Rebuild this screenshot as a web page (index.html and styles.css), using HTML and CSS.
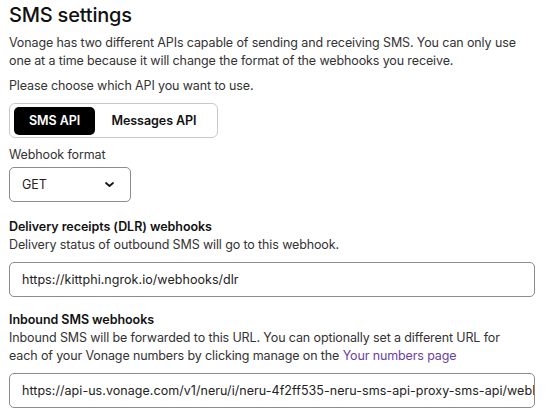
FILE: index.html
```html
<!DOCTYPE html>
<html>
<head>
<meta charset="utf-8">
<link rel="stylesheet" href="styles.css">
</head>
<body>
<div class="page">
  <h1 class="title">SMS settings</h1>
  <p class="text intro">Vonage has two different APIs capable of sending and receiving SMS. You can only use one at a time because it will change the format of the webhooks you receive.</p>
  <p class="text choose">Please choose which API you want to use.</p>
  <div class="tabs">
    <button class="tab active">SMS API</button>
    <button class="tab">Messages API</button>
  </div>
  <div class="label">Webhook format</div>
  <div class="select">
    <span>GET</span>
    <svg class="chev" width="9" height="5" viewBox="0 0 9 5"><path d="M1 1 L4.5 4 L8 1" fill="none" stroke="#111" stroke-width="1.7" stroke-linecap="round" stroke-linejoin="round"/></svg>
  </div>
  <div class="section">
    <div class="heading">Delivery receipts (DLR) webhooks</div>
    <p class="text">Delivery status of outbound SMS will go to this webhook.</p>
    <div class="input"><span>https://kittphi.ngrok.io/webhooks/dlr</span></div>
  </div>
  <div class="section section-tight">
    <div class="heading">Inbound SMS webhooks</div>
    <p class="text">Inbound SMS will be forwarded to this URL. You can optionally set a different URL for each of your Vonage numbers by clicking manage on the <a class="link" href="#">Your numbers page</a></p>
    <div class="input"><span>https://api-us.vonage.com/v1/neru/i/neru-4f2ff535-neru-sms-api-proxy-sms-api/webhooks/inbound</span></div>
  </div>
</div>
</body>
</html>
```
FILE: styles.css
```css
* { box-sizing: border-box; }
html, body { margin: 0; padding: 0; background: #fff; }
body {
  font-family: Inter, "Noto Sans", sans-serif;
  color: #2b2b2b;
  overflow: hidden;
}
.page {
  padding: 3px 14px 0 9px;
  display: flex;
  flex-direction: column;
  align-items: flex-start;
}
.title {
  margin: 0;
  font-size: 20px;
  font-weight: 500;
  line-height: 24px;
  color: #111;
  letter-spacing: -0.2px;
}
.text {
  margin: 0;
  max-width: 511px;
  font-size: 12.5px;
  letter-spacing: -0.12px;
  line-height: 18px;
  color: #333;
}
.intro { margin-top: 7px; }
.choose { margin-top: 7px; }
.tabs {
  margin-top: 8px;
  display: flex;
  align-items: center;
  padding: 0 4px;
  border: 1px solid #c8c8c8;
  border-radius: 6px;
  width: 209px;
  height: 35px;
}
.tab {
  font-family: inherit;
  font-size: 12.5px;
  letter-spacing: -0.05px;
  font-weight: 600;
  border: none;
  background: transparent;
  color: #111;
  padding: 0;
  border-radius: 5px;
  height: 28px;
  white-space: nowrap;
  cursor: pointer;
}
.tab.active {
  background: #000;
  color: #fff;
  width: 81px;
}
.tab:not(.active) {
  flex: 1;
}
.label {
  margin-top: 8px;
  font-size: 12.5px;
  letter-spacing: -0.12px;
  line-height: 18px;
  color: #333;
}
.select {
  margin-top: 3px;
  width: 122px;
  height: 35px;
  border: 1px solid #8c8c8c;
  border-radius: 5px;
  display: flex;
  align-items: center;
  justify-content: space-between;
  padding: 0 16px 0 12px;
  font-size: 12.5px;
  color: #222;
}
.section {
  align-self: stretch;
  margin-top: 16px;
  display: flex;
  flex-direction: column;
}
.section-tight { margin-top: 14px; }
.heading {
  font-size: 12.5px;
  letter-spacing: -0.05px;
  font-weight: 600;
  line-height: 18px;
  color: #111;
}
.input {
  margin-top: 8px;
  height: 35px;
  border: 1px solid #8c8c8c;
  border-radius: 5px;
  display: flex;
  align-items: center;
  padding: 0 12px;
  font-size: 12.5px;
  letter-spacing: 0.05px;
  color: #222;
  overflow: hidden;
  white-space: nowrap;
}
.link {
  color: #6b3fa6;
  text-decoration: none;
}
```
